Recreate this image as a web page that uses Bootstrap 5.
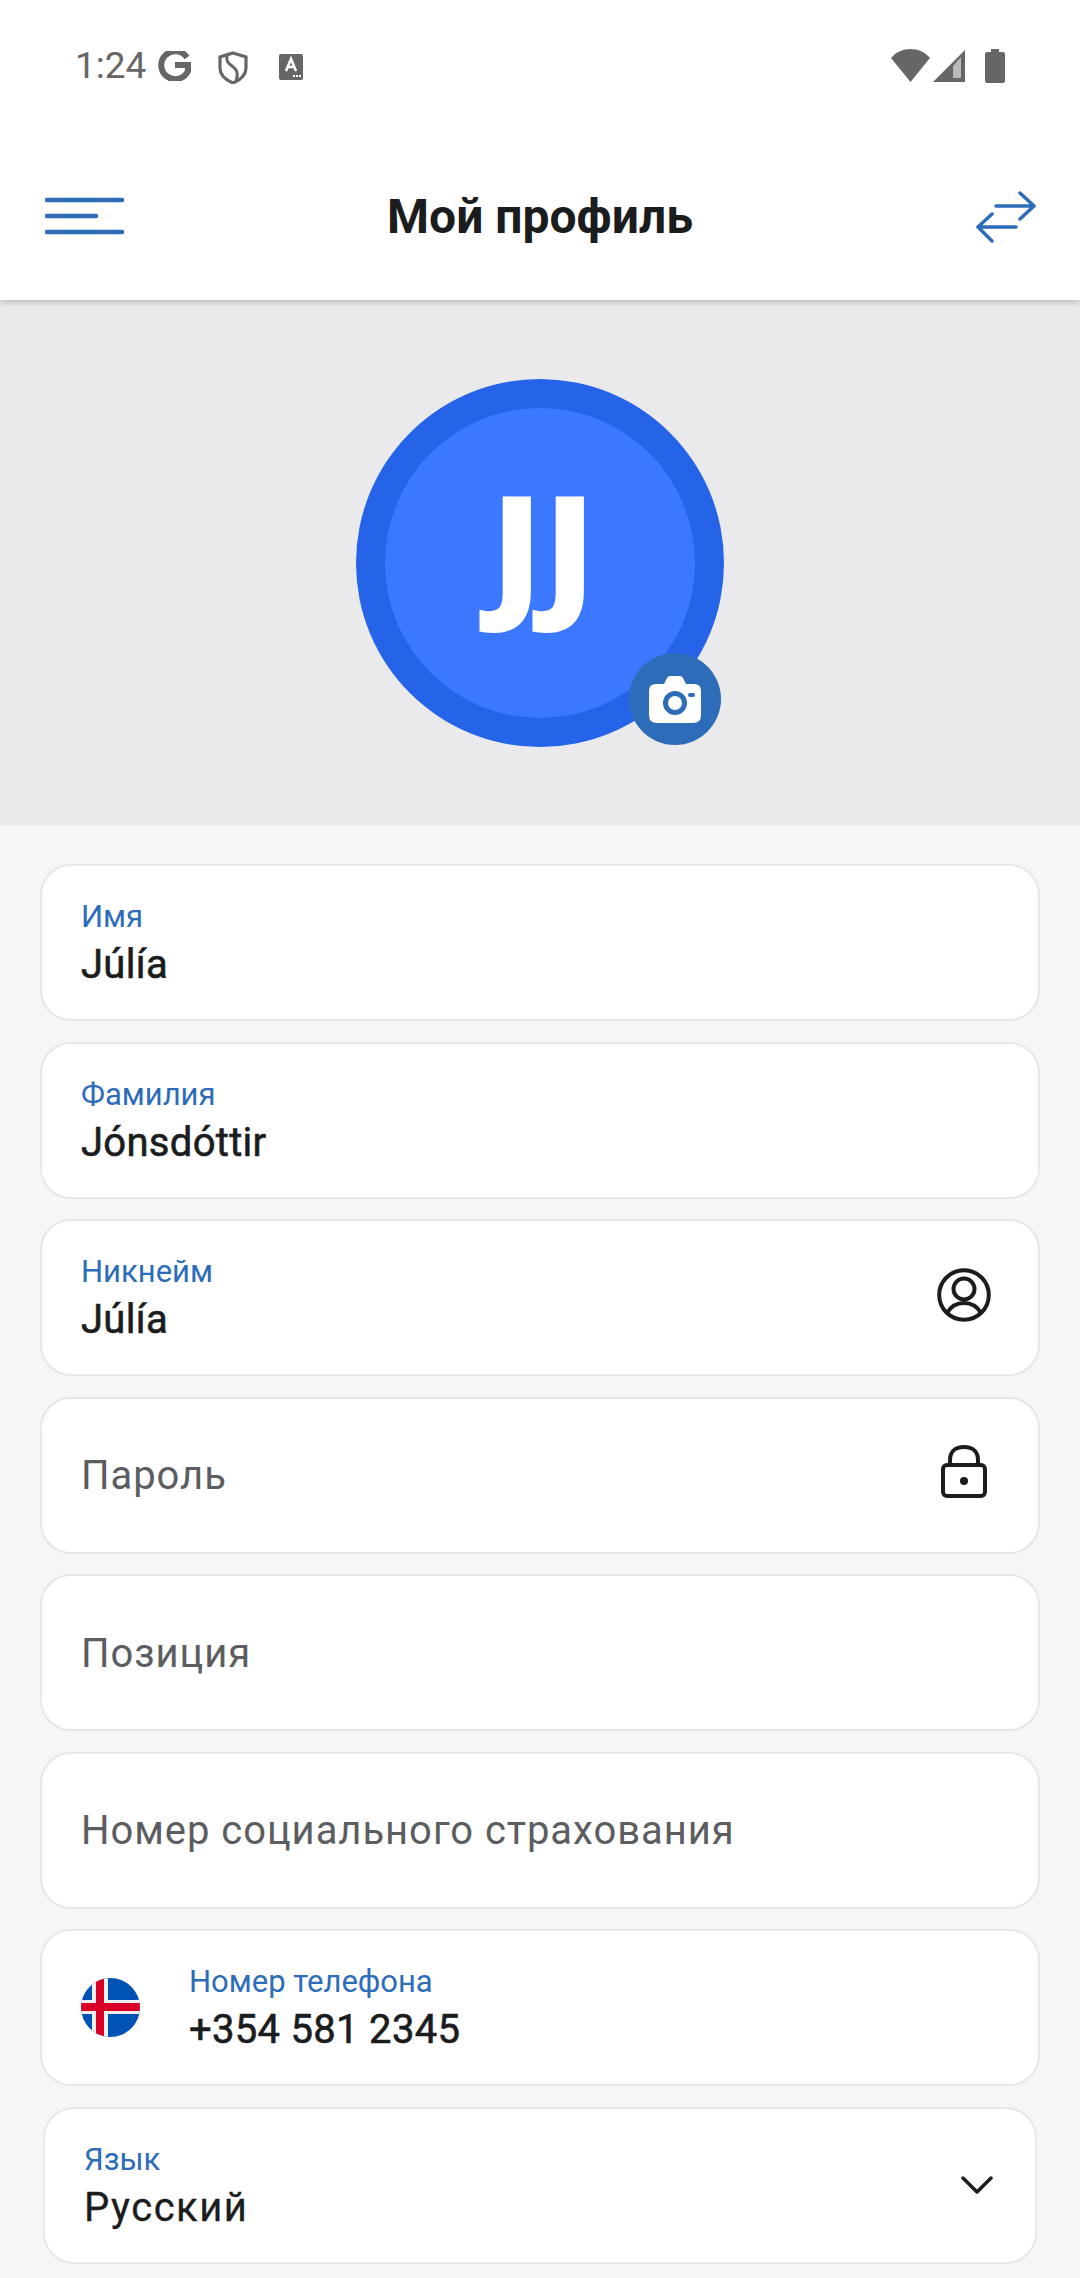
<!DOCTYPE html>
<html lang="ru">
<head>
    <meta charset="UTF-8">
    <title>Мой профиль</title>
    <link rel="stylesheet" href="https://cdn.jsdelivr.net/npm/bootstrap@5.3.2/dist/css/bootstrap.min.css">
    <style>
        html, body { width: 1080px; height: 2278px; overflow: hidden; }
        body { background: #f5f6f8; font-family: Roboto, "Liberation Sans", sans-serif; color: #1b1c1e; }
        .top-head { height: 300px; background: #fff; box-shadow: 0 2px 6px rgba(0,0,0,.22); position: relative; z-index: 2; }
        .status-row { height: 90px; padding: 51px 75px 0 75px; color: #666; }
        .status-right { margin-top: -2px; }
        .clock { font-size: 37px; line-height: 30px; width: 83px; flex: none; }
        .title-row { height: 210px; padding: 0 44px 0 45px; }
        .page-title { font-size: 48px; font-weight: 700; line-height: 56px; margin: 0; }
        .hero { height: 525px; background: #eaeaec; padding-top: 79px; }
        .avatar-out { width: 368px; height: 368px; background: #2563e8; position: relative; }
        .avatar-in { width: 310px; height: 310px; background: #3b78ff; color: #fff; font-family: "Open Sans", sans-serif; font-weight: 800; font-size: 145px; line-height: 1; letter-spacing: 2px; padding: 0 0 40px 8px; }
        .cam-badge { width: 92px; height: 92px; background: #2c6cb8; position: absolute; right: 3px; bottom: 2px; }
        .form-list { padding: 39px 40px 0; gap: 20.5px; }
        .field-box { height: 157px; background: #fff; border: 2px solid #e7e7ea; border-radius: 31px; padding: 0 47px 0 39px; }
        .field-lang { margin: 0 3px; padding-left: 39px; padding-right: 42px; }
        .field-label { color: #2c6cb8; font-size: 31px; line-height: 42px; margin-top: 3px; }
        .field-value { font-size: 40px; font-weight: 400; line-height: 54px; letter-spacing: .3px; -webkit-text-stroke: .6px #1b1c1e; }
        .field-lang .field-value { letter-spacing: 1.5px; -webkit-text-stroke-width: .3px; }
        .field-empty { font-size: 40px; line-height: 50px; color: #5c5d60; letter-spacing: .95px; padding-top: 2px; }
        .flag-mark { margin-right: 49px; }
        .user-mark { margin-bottom: 5px; }
        .lock-mark { margin: 0 4px 7px 0; }
    </style>
</head>
<body>

    <header class="top-head">
        <div class="status-row d-flex justify-content-between">
            <div class="d-flex align-items-start">
                <span class="clock">1:24</span>
                <svg width="33" height="30" viewBox="0 0 33 30"><path d="M29 6.500A14 14 0 1 0 30 20V14H17" fill="none" stroke="#666" stroke-width="6"/></svg>
                <svg width="30" height="33" viewBox="0 0 30 33" style="margin-left:27px"><path d="M15 2 28 6V17C28 24 22 29 15 32 8 29 2 24 2 17V6Z" fill="none" stroke="#666" stroke-width="3.200"/><path d="M9 5C8 10 10 12 14 15S21 21 18 30" fill="none" stroke="#666" stroke-width="3"/></svg>
                <svg width="24" height="26" viewBox="0 0 24 26" style="margin:3px 0 0 31px"><rect width="24" height="26" rx="2" fill="#666"/><path d="M7 17 12 5 17 17M8.800 13H15.200" fill="none" stroke="#fff" stroke-width="2.600"/><path d="M14 22h2M17 22h2M20 22h2" stroke="#fff" stroke-width="2"/></svg>
            </div>
            <div class="status-right d-flex align-items-start">
                <svg width="39" height="33" viewBox="0 0 39 33"><path d="M19.500 33 0 9C5 3 12 0 19.500 0S34 3 39 9Z" fill="#666"/></svg>
                <svg width="32" height="32" viewBox="0 0 32 32" style="margin:1px 0 0 3px"><path d="M32 0V32H0Z" fill="#666"/><path d="M20 16V28H28V7Z" fill="#fff" opacity=".55"/></svg>
                <svg width="20" height="34" viewBox="0 0 20 34" style="margin-left:20px"><path d="M6 0H14V3H18Q20 3 20 5V32Q20 34 18 34H2Q0 34 0 32V5Q0 3 2 3H6Z" fill="#666"/></svg>
            </div>
        </div>
        <div class="title-row d-flex justify-content-between align-items-start position-relative">
            <svg width="79" height="38" viewBox="0 0 79 38" style="margin-top:107px"><path d="M2 3H77M2 19H51M2 35H77" fill="none" stroke="#2c6cb8" stroke-width="4.500" stroke-linecap="round"/></svg>
            <h1 class="page-title position-absolute start-0 end-0 text-center" style="top:99px">Мой профиль</h1>
            <svg width="60" height="52" viewBox="0 0 60 52" style="margin-top:101px"><path d="M20 15H58M44 2 58 15 44 28M40 36H2M16 23 2 36 16 50" fill="none" stroke="#2c6cb8" stroke-width="3.500" stroke-linecap="round" stroke-linejoin="round"/></svg>
        </div>
    </header>

    <section class="hero d-flex justify-content-center">
        <div class="avatar-out rounded-circle d-flex align-items-center justify-content-center">
            <div class="avatar-in rounded-circle d-flex align-items-center justify-content-center">JJ</div>
            <div class="cam-badge rounded-circle d-flex align-items-center justify-content-center">
                <svg width="52" height="47" viewBox="0 0 52 47"><path d="M7 8H15L18 2Q19 0 21 0H31Q33 0 34 2L37 8H45Q52 8 52 15V39Q52 47 44 47H8Q0 47 0 39V15Q0 8 7 8Z" fill="#fff"/><circle cx="26" cy="27" r="9.500" fill="none" stroke="#2c6cb8" stroke-width="5"/><rect x="39" y="17" width="7" height="4" rx="2" fill="#2c6cb8"/></svg>
            </div>
        </div>
    </section>

    <main class="form-list d-flex flex-column">
        <div class="field-box d-flex flex-column justify-content-center">
            <div class="field-label">Имя</div>
            <div class="field-value">Júlía</div>
        </div>
        <div class="field-box d-flex flex-column justify-content-center">
            <div class="field-label">Фамилия</div>
            <div class="field-value">Jónsdóttir</div>
        </div>
        <div class="field-box d-flex align-items-center justify-content-between">
            <div>
                <div class="field-label">Никнейм</div>
                <div class="field-value">Júlía</div>
            </div>
            <svg class="user-mark" width="54" height="54" viewBox="0 0 54 54"><circle cx="27" cy="27" r="24.800" fill="none" stroke="#1b1c1e" stroke-width="4"/><circle cx="27" cy="21" r="10.500" fill="none" stroke="#1b1c1e" stroke-width="4"/><path d="M10 45C14 38 20 35 27 35S40 38 44 45" fill="none" stroke="#1b1c1e" stroke-width="4"/></svg>
        </div>
        <div class="field-box d-flex align-items-center justify-content-between">
            <div class="field-empty">Пароль</div>
            <svg class="lock-mark" width="46" height="53" viewBox="0 0 46 53"><rect x="2" y="20" width="42" height="31" rx="4" fill="none" stroke="#1b1c1e" stroke-width="4"/><path d="M9 20V15C9 7 14 2 23 2S37 7 37 15V20" fill="none" stroke="#1b1c1e" stroke-width="4"/><circle cx="23" cy="36" r="4" fill="#1b1c1e"/></svg>
        </div>
        <div class="field-box d-flex align-items-center">
            <div class="field-empty">Позиция</div>
        </div>
        <div class="field-box d-flex align-items-center">
            <div class="field-empty">Номер социального страхования</div>
        </div>
        <div class="field-box d-flex align-items-center">
            <svg class="flag-mark" width="59" height="59" viewBox="0 0 59 59"><defs><clipPath id="flagClip"><circle cx="29.500" cy="29.500" r="29.500"/></clipPath></defs><g clip-path="url(#flagClip)"><rect width="59" height="59" fill="#0052b4"/><path d="M11 0H27V22H59V36H27V59H11V36H0V22H11Z" fill="#f0f0f0"/><path d="M15 0H23V25H59V33H23V59H15V33H0V25H15Z" fill="#d80027"/></g></svg>
            <div>
                <div class="field-label">Номер телефона</div>
                <div class="field-value">+354 581 2345</div>
            </div>
        </div>
        <div class="field-box field-lang d-flex align-items-center justify-content-between">
            <div>
                <div class="field-label">Язык</div>
                <div class="field-value">Русский</div>
            </div>
            <svg width="32" height="18" viewBox="0 0 32 18"><path d="M2 2 16 16 30 2" fill="none" stroke="#1b1c1e" stroke-width="3.500" stroke-linecap="round" stroke-linejoin="round"/></svg>
        </div>
    </main>

</body>
</html>
